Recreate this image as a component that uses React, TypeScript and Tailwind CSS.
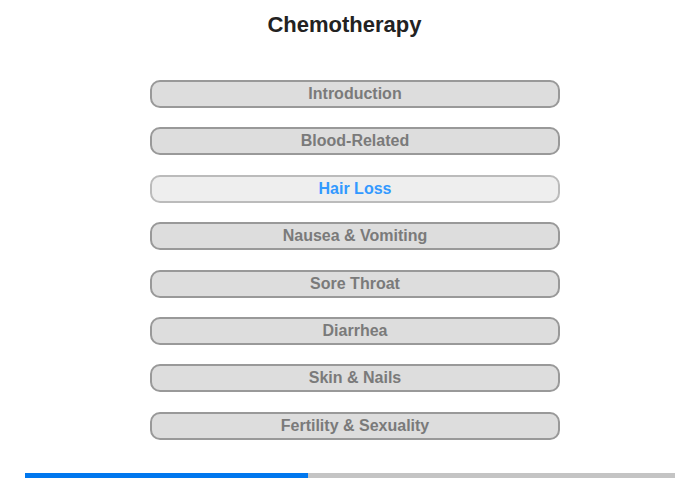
import React from "react";

const topics = [
  "Introduction",
  "Blood-Related",
  "Hair Loss",
  "Nausea & Vomiting",
  "Sore Throat",
  "Diarrhea",
  "Skin & Nails",
  "Fertility & Sexuality",
];

const active = "Hair Loss";

export default function App() {
  return (
    <div
      className="w-[700px] h-[480px] bg-white flex flex-col items-center"
      style={{ fontFamily: '"Liberation Sans", Arial, sans-serif' }}
    >
      <h1 className="mt-[11px] mr-[11px] text-[22px] leading-[28px] font-bold text-[#222]">Chemotherapy</h1>
      <div className="mt-[41px] ml-[10px] flex flex-col gap-[19.4px]">
        {topics.map((t) =>
          t === active ? (
            <div
              key={t}
              className="w-[410px] h-[28px] rounded-[10px] border-2 border-[#bbbbbb] bg-[#eeeeee] flex items-center justify-center text-[16px] font-bold text-[#3399ff]"
            >
              {t}
            </div>
          ) : (
            <div
              key={t}
              className="w-[410px] h-[28px] rounded-[10px] border-2 border-[#999999] bg-[#dddddd] flex items-center justify-center text-[16px] font-bold text-[#7a7a7a]"
            >
              {t}
            </div>
          )
        )}
      </div>
      <div className="mt-[33px] w-[650px] h-[5px] bg-[#c4c4c4] flex">
        <div className="w-[283px] h-full bg-[#0077ee]" />
      </div>
    </div>
  );
}
